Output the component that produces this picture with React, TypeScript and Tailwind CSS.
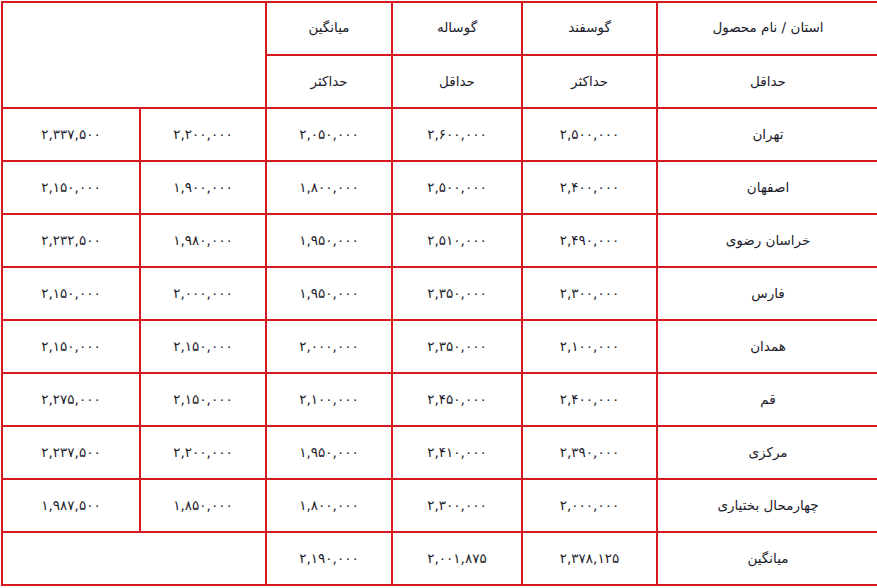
import { Fragment } from "react";

const fa = (s: string) => s.replace(/[0-9]/g, (d) => "۰۱۲۳۴۵۶۷۸۹"[Number(d)]);

const rows: [string, string[]][] = [
  ["تهران", ["2,500,000", "2,600,000", "2,050,000", "2,200,000", "2,337,500"]],
  ["اصفهان", ["2,400,000", "2,500,000", "1,800,000", "1,900,000", "2,150,000"]],
  ["خراسان رضوی", ["2,490,000", "2,510,000", "1,950,000", "1,980,000", "2,232,500"]],
  ["فارس", ["2,300,000", "2,350,000", "1,950,000", "2,000,000", "2,150,000"]],
  ["همدان", ["2,100,000", "2,350,000", "2,000,000", "2,150,000", "2,150,000"]],
  ["قم", ["2,400,000", "2,450,000", "2,100,000", "2,150,000", "2,275,000"]],
  ["مرکزی", ["2,390,000", "2,410,000", "1,950,000", "2,200,000", "2,237,500"]],
  ["چهارمحال بختیاری", ["2,000,000", "2,300,000", "1,800,000", "1,850,000", "1,987,500"]],
];

function Cell({ children, className = "" }: { children?: React.ReactNode; className?: string }) {
  return (
    <div className={`bg-white flex items-center justify-center h-full ${className}`}>
      {children}
    </div>
  );
}

export default function App() {
  return (
    <div className="w-[877px] h-[588px] overflow-hidden bg-white pt-px pl-px">
      <div
        dir="rtl"
        className="w-[879px] grid grid-cols-[220px_133px_128px_124px_124px_136px] auto-rows-[51px] gap-[2px] p-[2px] bg-[#d71920] text-[13.5px] text-[#1c1c2b] [font-family:'DejaVu_Sans',sans-serif]"
      >
        <Cell className="pb-[2px]">استان / نام محصول</Cell>
        <Cell className="pb-[2px]">گوسفند</Cell>
        <Cell className="pb-[2px]">گوساله</Cell>
        <Cell className="pb-[2px]">میانگین</Cell>
        <Cell className="col-span-2 row-span-2" />
        <Cell>حداقل</Cell>
        <Cell>حداکثر</Cell>
        <Cell>حداقل</Cell>
        <Cell>حداکثر</Cell>
        {rows.map(([name, vals]) => (
          <Fragment key={name}>
            <Cell>{name}</Cell>
            {vals.map((v, i) => (
              <Cell key={i}>{fa(v)}</Cell>
            ))}
          </Fragment>
        ))}
        <Cell>میانگین</Cell>
        <Cell>{fa("2,378,125")}</Cell>
        <Cell>{fa("2,001,875")}</Cell>
        <Cell>{fa("2,190,000")}</Cell>
        <Cell className="col-span-2" />
      </div>
    </div>
  );
}
